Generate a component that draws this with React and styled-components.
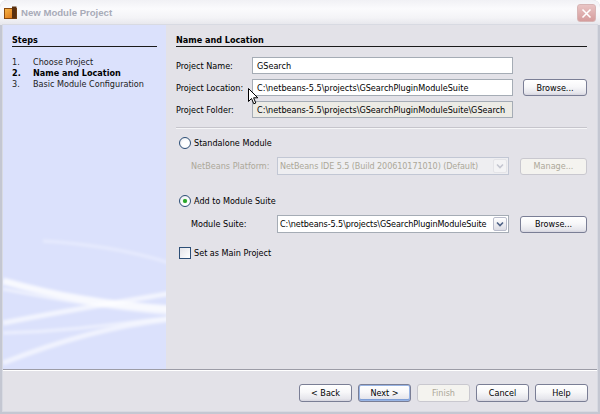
import React from "react";
import styled, { createGlobalStyle } from "styled-components";

const GlobalStyle = createGlobalStyle`
  html, body { margin: 0; padding: 0; background: #ffffff; }
  * { box-sizing: border-box; }
`;

const FONT = `"DejaVu Sans Condensed", "Liberation Sans", sans-serif`;

const Window = styled.div`
  width: 600px;
  height: 414px;
  display: flex;
  flex-direction: column;
  font-family: ${FONT};
  font-size: 9px;
  color: #000;
  background: #c4c7d2;
  border-radius: 7px 7px 0 0;
  overflow: hidden;
`;

const TitleBar = styled.div`
  height: 25px;
  flex: none;
  display: flex;
  align-items: center;
  padding: 0 3px 0 4px;
  gap: 4px;
  background: linear-gradient(#f1f1f5 0%, #fbfbfd 35%, #f4f4f7 70%, #e6e6ec 100%);
`;

const TitleText = styled.span`
  flex: 1;
  font-family: "Liberation Sans", sans-serif;
  font-weight: bold;
  font-size: 9.6px;
  color: #a8abb8;
  padding-left: 0;
`;

const CloseButton = styled.div`
  width: 19px;
  height: 18px;
  margin-top: 1px;
  margin-right: 1px;
  border-radius: 3px;
  border: 1px solid #d7b5b5;
  background: linear-gradient(#e9c4c4, #d59c9c);
  display: flex;
  align-items: center;
  justify-content: center;
`;

const Frame = styled.div`
  flex: 1;
  display: flex;
  flex-direction: column;
  margin: 0 3px 3px 3px;
  background: #e3e2e8;
  box-shadow: 0 0 0 1px #d8dae2;
`;

const Main = styled.div`
  height: 344px;
  display: flex;
`;

const StepsPanel = styled.div`
  width: 163px;
  flex: none;
  position: relative;
  overflow: hidden;
  background: #dbe1fc;
  padding: 9px 9px 0 9px;
`;

const Waves = styled.svg`
  position: absolute;
  left: 0;
  bottom: 0;
  width: 163px;
  height: 160px;
`;

const SectionTitle = styled.div`
  position: relative;
  height: 13px;
  line-height: 12px;
  font-weight: bold;
  border-bottom: 1px solid #1a1a1a;
`;

const StepList = styled.ol`
  position: relative;
  list-style: none;
  margin: 10px 0 0 0;
  padding: 0;
`;

const Step = styled.li`
  display: flex;
  height: 11px;
  line-height: 11px;
  font-weight: ${(p) => (p.$current ? "bold" : "normal")};
  color: ${(p) => (p.$current ? "#000" : "#222")};
`;

const StepNum = styled.span`
  width: 21px;
  flex: none;
`;

const ContentPanel = styled.div`
  flex: 1;
  position: relative;
  padding: 9px 10px 0 10px;
`;

const FormGrid = styled.div`
  display: grid;
  grid-template-columns: 66px 261px 64px;
  column-gap: 10px;
  row-gap: 5px;
  margin-top: 10px;
  align-items: center;
`;

const Label = styled.label`
  color: ${(p) => (p.$disabled ? "#aca899" : "#000")};
  white-space: nowrap;
`;

const TextField = styled.div`
  height: 17px;
  display: flex;
  align-items: center;
  padding: 0 4px;
  border: 1px solid #a5acb5;
  background: ${(p) => (p.$readOnly ? "#ecebe5" : "#ffffff")};
  white-space: nowrap;
  overflow: hidden;
`;

const Button = styled.div`
  height: ${(p) => p.$h || 18}px;
  width: ${(p) => (p.$w ? `${p.$w}px` : "auto")};
  display: flex;
  align-items: center;
  justify-content: center;
  border-radius: 3px;
  border: 1px solid ${(p) => (p.$disabled ? "#c9c8cf" : "#7a7e95")};
  background: ${(p) =>
    p.$disabled
      ? "#f4f3ef"
      : "linear-gradient(#ffffff 0%, #f7f7f9 45%, #e6e6ec 85%, #d6d5df 100%)"};
  color: ${(p) => (p.$disabled ? "#aca899" : "#000")};
  box-shadow: ${(p) =>
    p.$default ? "inset 0 0 0 1px #98b4e4, inset 0 -1px 0 1px #7e9ed6" : "none"};
  white-space: nowrap;
`;

const Divider = styled.div`
  margin-top: 9px;
  height: 2px;
  border-top: 1px solid #c6c5cc;
  border-bottom: 1px solid #f6f6f8;
`;

const OptionRow = styled.div`
  display: flex;
  align-items: center;
  height: 13px;
  margin-top: ${(p) => p.$mt}px;
  padding-left: 3px;
  gap: 3px;
`;

const Radio = styled.span`
  width: 12px;
  height: 12px;
  border-radius: 50%;
  border: 1px solid #2c4e76;
  background: radial-gradient(circle at 60% 60%, #ffffff 40%, #dfe0e6 100%);
  display: flex;
  align-items: center;
  justify-content: center;
  &::after {
    content: "";
    width: 4px;
    height: 4px;
    border-radius: 50%;
    background: ${(p) => (p.$checked ? "#2aa62a" : "transparent")};
    box-shadow: ${(p) => (p.$checked ? "0 0 1px #60c860" : "none")};
  }
`;

const Checkbox = styled.span`
  width: 12px;
  height: 12px;
  border: 1px solid #2c4e76;
  background: linear-gradient(135deg, #e3e3e8, #ffffff);
`;

const SubGrid = styled.div`
  display: grid;
  grid-template-columns: 75px 232px 67px;
  column-gap: 11px;
  align-items: center;
  margin-top: ${(p) => p.$mt}px;
  padding-left: 15px;
`;

const Combo = styled.div`
  height: 18px;
  display: flex;
  align-items: center;
  padding: 1px;
  border: 1px solid ${(p) => (p.$disabled ? "#c2c7d4" : "#a5acb5")};
  background: ${(p) => (p.$disabled ? "#eeeef1" : "#ffffff")};
  color: ${(p) => (p.$disabled ? "#aca899" : "#000")};
`;

const ComboText = styled.span`
  flex: 1;
  padding-left: 1px;
  letter-spacing: -0.1px;
  white-space: nowrap;
  overflow: hidden;
`;

const ComboArrow = styled.span`
  width: 14px;
  height: 14px;
  flex: none;
  display: flex;
  align-items: center;
  justify-content: center;
  border-radius: 2px;
  border: 1px solid ${(p) => (p.$disabled ? "#e4e4e8" : "#b9bccb")};
  background: ${(p) => (p.$disabled ? "#f3f3f5" : "linear-gradient(#ffffff, #dcdce4)")};
`;

const Footer = styled.div`
  border-top: 1px solid #9c9ca6;
  box-shadow: inset 0 1px 0 #ffffff;
  flex: 1;
  display: flex;
  justify-content: flex-end;
  align-items: flex-start;
  gap: 6px;
  padding: 14px 9px 0 0;
`;

const Cursor = styled.svg`
  position: absolute;
  left: 82px;
  top: 63px;
`;

const Chevron = ({ color }) => (
  <svg width="8" height="6" viewBox="0 0 8 6">
    <path d="M1 1.5 L4 4.5 L7 1.5" fill="none" stroke={color} strokeWidth="1.6" />
  </svg>
);

export default function App() {
  return (
    <>
      <GlobalStyle />
      <Window>
        <TitleBar>
          <svg width="13" height="13" viewBox="0 0 13 13">
            <defs>
              <linearGradient id="ic" x1="0" y1="0" x2="1" y2="1">
                <stop offset="0" stopColor="#f8b84a" />
                <stop offset="1" stopColor="#d86a10" />
              </linearGradient>
            </defs>
            <rect x="0.5" y="2.5" width="12" height="10" fill="url(#ic)" stroke="#8a4a10" />
            <rect x="8" y="0.5" width="4.5" height="12" fill="#5a3010" />
          </svg>
          <TitleText>New Module Project</TitleText>
          <CloseButton>
            <svg width="11" height="11" viewBox="0 0 11 11">
              <path d="M1.5 1.5 L9.5 9.5 M9.5 1.5 L1.5 9.5" stroke="#ffffff" strokeWidth="1.6" />
            </svg>
          </CloseButton>
        </TitleBar>
        <Frame>
          <Main>
            <StepsPanel>
              <Waves viewBox="0 0 163 160" preserveAspectRatio="none">
                <defs>
                  <filter id="bl" x="-10%" y="-50%" width="120%" height="200%">
                    <feGaussianBlur stdDeviation="1.6" />
                  </filter>
                </defs>
                <g filter="url(#bl)" fill="none" stroke="#ffffff">
                  <path d="M40 32 C90 35 130 42 170 55" strokeWidth="3" opacity="0.35" />
                  <path d="M0 72 C50 86 100 96 170 100" strokeWidth="7" opacity="0.8" />
                  <path d="M0 80 C60 92 110 100 170 105" strokeWidth="3" opacity="0.55" />
                  <path d="M0 114 C60 102 110 94 170 84" strokeWidth="5" opacity="0.65" />
                  <path d="M0 124 C70 122 120 114 170 108" strokeWidth="3" opacity="0.5" />
                  <path d="M0 154 C50 134 110 116 170 110" strokeWidth="5" opacity="0.6" />
                </g>
              </Waves>
              <SectionTitle>Steps</SectionTitle>
              <StepList>
                <Step><StepNum>1.</StepNum>Choose Project</Step>
                <Step $current><StepNum>2.</StepNum>Name and Location</Step>
                <Step><StepNum>3.</StepNum>Basic Module Configuration</Step>
              </StepList>
            </StepsPanel>
            <ContentPanel>
              <SectionTitle>Name and Location</SectionTitle>
              <FormGrid>
                <Label>Project Name:</Label>
                <TextField>GSearch</TextField>
                <span />
                <Label>Project Location:</Label>
                <TextField>C:\netbeans-5.5\projects\GSearchPluginModuleSuite</TextField>
                <Button $h={17}>Browse...</Button>
                <Label>Project Folder:</Label>
                <TextField $readOnly>C:\netbeans-5.5\projects\GSearchPluginModuleSuite\GSearch</TextField>
                <span />
              </FormGrid>
              <Divider />
              <OptionRow $mt={7}>
                <Radio />
                <span>Standalone Module</span>
              </OptionRow>
              <SubGrid $mt={8}>
                <Label $disabled>NetBeans Platform:</Label>
                <Combo $disabled>
                  <ComboText>NetBeans IDE 5.5 (Build 200610171010) (Default)</ComboText>
                  <ComboArrow $disabled><Chevron color="#c4c6d0" /></ComboArrow>
                </Combo>
                <Button $disabled $h={17}>Manage...</Button>
              </SubGrid>
              <OptionRow $mt={19}>
                <Radio $checked />
                <span>Add to Module Suite</span>
              </OptionRow>
              <SubGrid $mt={8}>
                <Label>Module Suite:</Label>
                <Combo>
                  <ComboText>C:\netbeans-5.5\projects\GSearchPluginModuleSuite</ComboText>
                  <ComboArrow><Chevron color="#4d6185" /></ComboArrow>
                </Combo>
                <Button $h={17}>Browse...</Button>
              </SubGrid>
              <OptionRow $mt={13}>
                <Checkbox />
                <span>Set as Main Project</span>
              </OptionRow>
              <Cursor width="11" height="17" viewBox="0 0 11 17">
                <path
                  d="M0.5 0.5 L0.5 13.5 L3.5 10.5 L5.8 15.8 L7.8 15 L5.6 9.8 L9.8 9.8 Z"
                  fill="#ffffff"
                  stroke="#000000"
                  strokeWidth="1"
                  strokeLinejoin="round"
                />
              </Cursor>
            </ContentPanel>
          </Main>
          <Footer>
            <Button $w={53}>&lt; Back</Button>
            <Button $w={53} $default>Next &gt;</Button>
            <Button $w={53} $disabled>Finish</Button>
            <Button $w={53}>Cancel</Button>
            <Button $w={53}>Help</Button>
          </Footer>
        </Frame>
      </Window>
    </>
  );
}
